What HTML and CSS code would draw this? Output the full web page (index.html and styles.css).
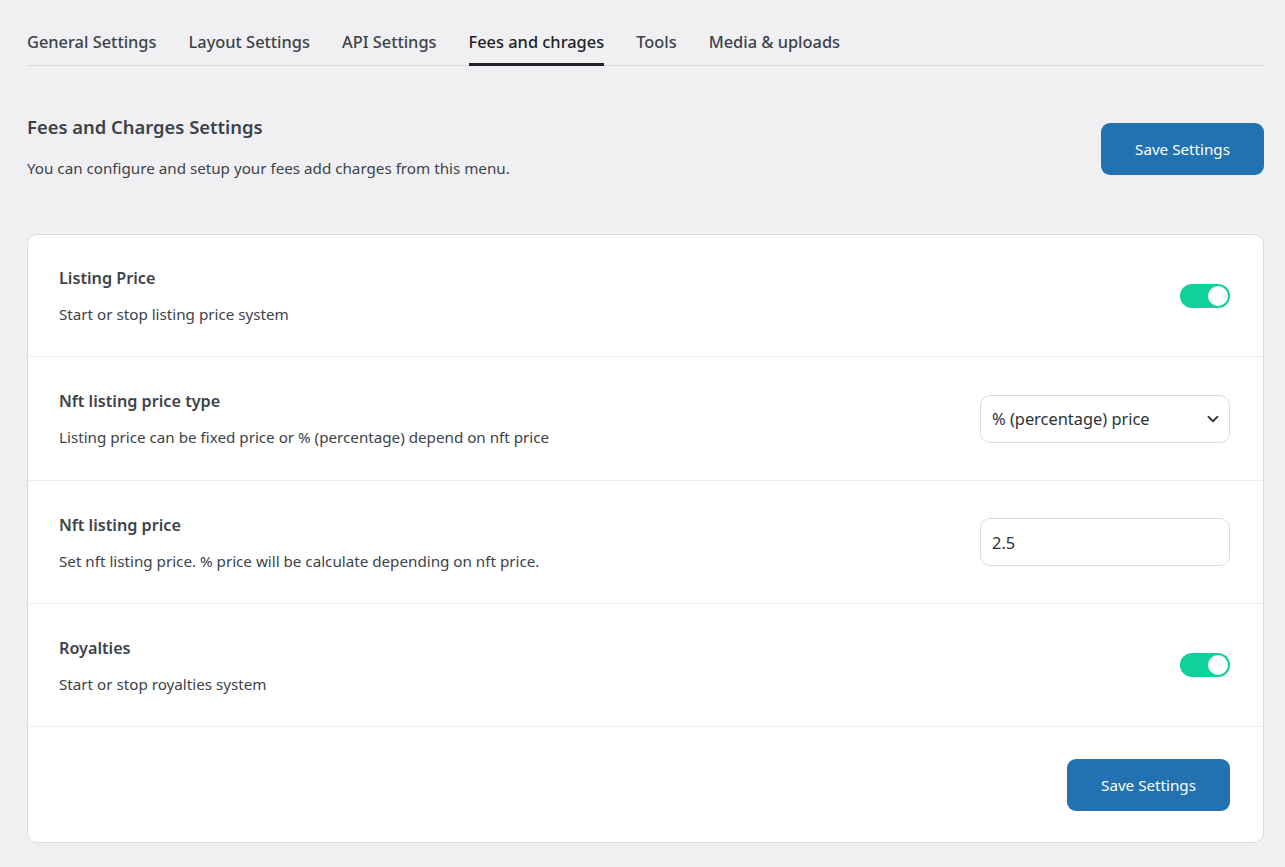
FILE: index.html
```html
<!DOCTYPE html>
<html>
<head>
<meta charset="utf-8">
<link rel="stylesheet" href="styles.css">
</head>
<body>
<div class="page">
  <nav class="tabs">
    <a class="tab">General Settings</a>
    <a class="tab">Layout Settings</a>
    <a class="tab">API Settings</a>
    <a class="tab active">Fees and chrages</a>
    <a class="tab">Tools</a>
    <a class="tab">Media &amp; uploads</a>
  </nav>
  <header class="head">
    <div class="head-text">
      <h1 class="head-title">Fees and Charges Settings</h1>
      <p class="head-desc">You can configure and setup your fees add charges from this menu.</p>
    </div>
    <button class="btn">Save Settings</button>
  </header>
  <section class="card">
    <div class="row">
      <div class="row-text">
        <div class="row-title">Listing Price</div>
        <div class="row-desc">Start or stop listing price system</div>
      </div>
      <span class="toggle"><span class="knob"></span></span>
    </div>
    <div class="row">
      <div class="row-text">
        <div class="row-title">Nft listing price type</div>
        <div class="row-desc">Listing price can be fixed price or % (percentage) depend on nft price</div>
      </div>
      <div class="select">
        <span>% (percentage) price</span>
        <svg class="chev" width="14" height="14" viewBox="0 0 14 14"><path d="M2.5 4.8 L7 9.3 L11.5 4.8" fill="none" stroke="#3c434a" stroke-width="2" stroke-linecap="round" stroke-linejoin="round"/></svg>
      </div>
    </div>
    <div class="row">
      <div class="row-text">
        <div class="row-title">Nft listing price</div>
        <div class="row-desc">Set nft listing price. % price will be calculate depending on nft price.</div>
      </div>
      <div class="input">2.5</div>
    </div>
    <div class="row">
      <div class="row-text">
        <div class="row-title">Royalties</div>
        <div class="row-desc">Start or stop royalties system</div>
      </div>
      <span class="toggle"><span class="knob"></span></span>
    </div>
    <div class="card-foot">
      <button class="btn">Save Settings</button>
    </div>
  </section>
</div>
</body>
</html>
```
FILE: styles.css
```css
* { box-sizing: border-box; }
html, body { margin: 0; padding: 0; }
body {
  background: #f0f0f2;
  font-family: "Noto Sans", "Open Sans", sans-serif;
  color: #3c434a;
}
.page { padding: 0 21px 0 27px; }
.tabs {
  display: flex;
  gap: 32px;
  border-bottom: 1px solid #dcdcde;
  padding-top: 30px;
}
.tab {
  font-size: 16.4px;
  font-weight: 500;
  color: #3c434a;
  padding-bottom: 9px;
  border-bottom: 3px solid transparent;
  margin-bottom: -1px;
  line-height: 24px;
}
.tab.active { color: #1d2327; border-bottom-color: #1d2327; }
.head {
  display: flex;
  justify-content: space-between;
  align-items: flex-start;
  margin-top: 49px;
}
.head-title {
  margin: 0;
  font-size: 18.4px;
  font-weight: 600;
  line-height: 24px;
  color: #3c434a;
}
.head-desc {
  margin: 19px 0 0;
  font-size: 15.2px;
  line-height: 20px;
}
.btn {
  font-family: inherit;
  background: #2271b1;
  color: #fff;
  border: none;
  border-radius: 9px;
  width: 163px;
  height: 52px;
  font-size: 15.2px;
  cursor: pointer;
}
.head .btn { margin-top: 8px; }
.card {
  margin-top: 56px;
  background: #fff;
  border: 1px solid #dcdcde;
  border-radius: 10px;
}
.row {
  display: flex;
  justify-content: space-between;
  align-items: center;
  height: 123px;
  padding: 0 33px 0 31px;
  border-bottom: 1px solid #ededed;
}
.row:first-child { height: 122px; }
.row:nth-child(2) { height: 124px; }
.row-title {
  font-size: 16.2px;
  font-weight: 600;
  line-height: 22px;
  color: #3c434a;
}
.row-desc {
  margin-top: 15px;
  font-size: 15.2px;
  line-height: 20px;
  color: #3c434a;
}
.toggle {
  width: 50px;
  height: 24px;
  background: #0fd19c;
  border-radius: 12px;
  display: flex;
  justify-content: flex-end;
  align-items: center;
  padding: 2px;
}
.knob {
  width: 20px;
  height: 20px;
  background: #fff;
  border-radius: 50%;
}
.select, .input {
  width: 250px;
  height: 48px;
  border: 1px solid #dcdcde;
  border-radius: 10px;
  display: flex;
  align-items: center;
  padding: 0 11px;
  font-size: 16.4px;
  color: #2c3338;
}
.select { justify-content: space-between; padding-right: 9px; }
.card-foot {
  display: flex;
  justify-content: flex-end;
  padding: 32px 33px 31px;
}
```
